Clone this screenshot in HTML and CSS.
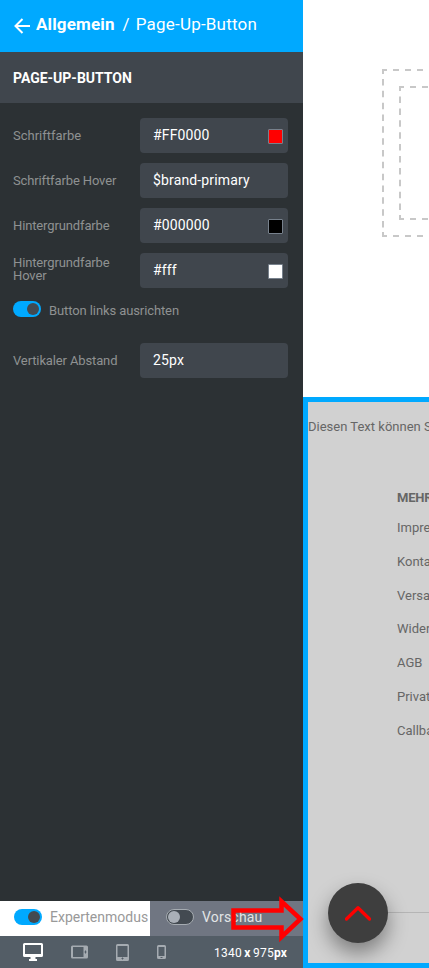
FILE: index.html
```html
<!DOCTYPE html>
<html lang="de">
<head>
<meta charset="utf-8">
<title>Page-Up-Button</title>
<link rel="stylesheet" href="styles.css">
</head>
<body>
<div class="app">
  <aside class="sidebar">
    <header class="crumbs">
      <svg class="back" width="16" height="16" viewBox="0 0 16 16"><path d="M16 8H1.5M8.5 1L1.5 8l7 7" fill="none" stroke="#fff" stroke-width="2"/></svg>
      <b>Allgemein</b><span class="slash">/</span><span class="current">Page-Up-Button</span>
    </header>
    <h2 class="section"><span>PAGE-UP-BUTTON</span></h2>
    <div class="form">
      <div class="row"><label class="wide">Schriftfarbe</label><div class="field"><span>#FF0000</span><i class="swatch red"></i></div></div>
      <div class="row"><label>Schriftfarbe Hover</label><div class="field"><span>$brand-primary</span></div></div>
      <div class="row"><label>Hintergrundfarbe</label><div class="field"><span>#000000</span><i class="swatch black"></i></div></div>
      <div class="row"><label class="double">Hintergrundfarbe<br>Hover</label><div class="field"><span>#fff</span><i class="swatch white"></i></div></div>
      <div class="switch-row"><i class="toggle on"></i><span>Button links ausrichten</span></div>
      <div class="row"><label>Vertikaler Abstand</label><div class="field"><span>25px</span></div></div>
    </div>
    <footer>
      <div class="modes">
        <div class="mode expert"><i class="toggle on"></i><span>Expertenmodus</span></div>
        <div class="mode preview"><i class="toggle off"></i><span>Vorschau</span></div>
      </div>
      <div class="devices">
        <svg class="desktop" width="20" height="18" viewBox="0 0 20 18"><path fill="#fff" fill-rule="evenodd" d="M1.5 0h17Q20 0 20 1.5v11Q20 14 18.500 14H12.500v2h1.500v2H6v-2h1.500v-2h-6Q0 14 0 12.500v-11Q0 0 1.500 0zM2 2v9h16V2z"/></svg>
        <svg class="landscape" width="17" height="14" viewBox="0 0 17 14"><path fill="#a5abb1" fill-rule="evenodd" d="M1.500 .5h14Q17 .5 17 2v10Q17 13.500 15.500 13.500h-14Q0 13.500 0 12V2Q0 .5 1.500 .500zM2 2v10h10.500V2z"/><path d="M14.500 5.500v3M13.500 7h2" stroke="#535d66"/></svg>
        <svg class="tablet" width="13" height="17" viewBox="0 0 13 17"><path fill="#a5abb1" fill-rule="evenodd" d="M1.500 0h10Q13 0 13 1.500v14Q13 17 11.500 17h-10Q0 17 0 15.500v-14Q0 0 1.500 0zM1.500 2v11h10V2z"/><path d="M5.500 14.500h2M6.500 13.500v2" stroke="#535d66"/></svg>
        <svg class="phone" width="9" height="14" viewBox="0 0 9 14"><path fill="#a5abb1" fill-rule="evenodd" d="M1.500 0h6Q9 0 9 1.500v11Q9 14 7.500 14h-6Q0 14 0 12.500v-11Q0 0 1.500 0zM1.500 2v9h6V2z"/><path d="M3.500 12.500h2" stroke="#535d66"/></svg>
        <span class="size">1340<b class="times">x</b>975<b>px</b></span>
      </div>
    </footer>
  </aside>
  <main class="canvas">
    <div class="upper">
      <svg class="frames" width="47" height="168" viewBox="0 0 47 168" fill="none" stroke="#c8c8c8" stroke-width="2">
        <path d="M0 1h5M11 1h6M23 1h6M35 1h6M0 167h5M11 167h6M23 167h6M35 167h6M17 18h5M28 18h6M40 18h6M17 150h5M28 150h6M40 150h6"/>
        <path d="M1 0v5M1 163v5M18 17v5M18 146v5"/>
        <path d="M1 10v149" stroke-dasharray="6.500 5.330"/>
        <path d="M18 27.500v114.500" stroke-dasharray="6.500 5.400"/>
      </svg>
    </div>
    <section class="selected">
      <p class="notice">Diesen Text können S</p>
      <nav>
        <h3>MEHR</h3>
        <a>Impre</a><a>Konta</a><a>Versa</a><a>Wider</a><a>AGB</a><a>Privat</a><a>Callba</a>
      </nav>
      <hr>
      <div class="page-up"><svg width="26" height="15" viewBox="0 0 26 15"><path d="M1.500 13L13 1.800 24.500 13" fill="none" stroke="#f00" stroke-width="3.300" stroke-linecap="round" stroke-linejoin="round"/></svg></div>
    </section>
  </main>
  <svg class="pointer" width="76" height="48" viewBox="0 0 76 48"><path d="M4.500 15.500h48V6.500L71.500 24 52.500 42V32.500h-48z" fill="none" stroke="#f00" stroke-width="4.500"/></svg>
</div>
</body>
</html>
```
FILE: styles.css
```css
* { box-sizing: border-box; }
body { margin: 0; font-family: Roboto, sans-serif; overflow: hidden; }
.app { position: relative; display: flex; width: 429px; height: 968px; overflow: hidden; }
.sidebar { width: 303px; flex: none; display: flex; flex-direction: column; background: #2c3134; }
.crumbs { height: 52px; padding: 0 0 5px 14px; display: flex; align-items: center; background: #00a9ff; color: #fff; font-size: 17px; letter-spacing: .15px; white-space: nowrap; }
.back { margin: 4px 6px 0 0; }
.slash { margin: 0 6px 0 8px; }
.current { letter-spacing: .2px; }
.section { margin: 0; height: 51px; padding-left: 13px; display: flex; align-items: center; background: #40464d; color: #fff; font-size: 14px; font-weight: 700; }
.form { padding: 15px 15px 0 13px; flex: 1; }
.row { display: flex; height: 35px; margin-bottom: 10px; align-items: center; }
label { width: 127px; flex: none; color: #8f9192; font-size: 13px; line-height: 13px; letter-spacing: -.13px; white-space: nowrap; }
.wide { letter-spacing: 0; }
.double { padding-bottom: 3px; }
.field { flex: 1; height: 35px; padding: 0 5px 2px 13px; display: flex; align-items: center; justify-content: space-between; border-radius: 4px; background: #40464d; color: #fff; font-size: 14px; letter-spacing: .15px; }
.swatch { width: 15px; height: 15px; margin-top: 4px; border: 1px solid #77818c; border-radius: 1px; }
.red { background: #f00; }
.black { background: #000; }
.white { background: #fff; }
.toggle { display: block; flex: none; width: 28px; height: 16px; border-radius: 8px; background: #00a9ff; }
.toggle::after { content: ""; display: block; width: 12px; height: 12px; margin: 2px 0 0 14px; border-radius: 50%; background: #434a51; }
.switch-row { display: flex; height: 45px; padding-top: 3px; gap: 8px; color: #8f9192; font-size: 13px; line-height: 19px; letter-spacing: -.1px; }
.modes { display: flex; height: 35px; }
.mode { display: flex; align-items: center; font-size: 14px; padding: 0 0 4px 14px; gap: 8px; white-space: nowrap; }
.mode span { padding-top: 1px; letter-spacing: .2px; }
.expert { width: 150px; background: #fff; color: #999; }
.expert span { letter-spacing: 0; }
.preview { width: 153px; padding-left: 16px; background: #707682; color: #e2e4e6; }
.off { border: 1px solid #a5abb1; background: #434a51; }
.off::after { width: 12px; height: 12px; margin: 1px 0 0 1px; background: #a9afb7; }
.devices { display: flex; height: 32px; padding-left: 23px; align-items: center; background: #535d66; }
.landscape { margin-left: 28px; }
.tablet { margin-left: 28px; }
.phone { margin-left: 28px; }
.size { margin: 2px 0 0 48px; color: #fff; font-size: 12px; letter-spacing: .25px; white-space: nowrap; }
.times { margin: 0 2.3px; }
.canvas { width: 126px; flex: none; display: flex; flex-direction: column; background: #fff; }
.upper { height: 397px; padding: 69px 0 0 79px; }
.frames { display: block; }
.selected { position: relative; height: 571px; border: 5px solid #00a9ff; border-right: 0; background: #d1d1d1; overflow: hidden; color: #666; font-size: 13px; white-space: nowrap; }
.notice { margin: 16px 0 0; line-height: 18px; }
nav { margin: 53px 0 0 89px; display: flex; flex-direction: column; }
h3 { margin: 0 0 12px; font-size: 13px; line-height: 18px; letter-spacing: -.2px; }
nav a { height: 33.8px; line-height: 18px; }
hr { margin: 156px 0 0 74px; border: 0; border-top: 1px solid #b5b5b5; }
.page-up { position: absolute; left: 20px; top: 481px; width: 60px; height: 60px; display: flex; align-items: center; justify-content: center; border-radius: 50%; background: #3e3e3e; box-shadow: 0 10px 20px rgba(0,0,0,.4); }
.pointer { position: absolute; left: 229px; top: 895px; }
```
